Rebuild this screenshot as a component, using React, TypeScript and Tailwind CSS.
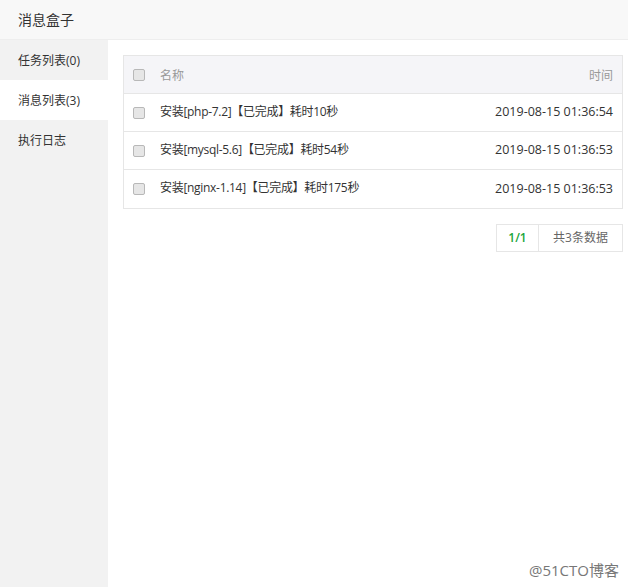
import React from 'react';

const rows = [
  { name: '安装[php-7.2]【已完成】耗时10秒', time: '2019-08-15 01:36:54' },
  { name: '安装[mysql-5.6]【已完成】耗时54秒', time: '2019-08-15 01:36:53' },
  { name: '安装[nginx-1.14]【已完成】耗时175秒', time: '2019-08-15 01:36:53' },
];

const tabs = ['任务列表(0)', '消息列表(3)', '执行日志'];

function Check() {
  return <span className="block w-[12px] h-[12px] border border-[#b8b8b8] rounded-[2px] bg-[#e6e6e6]" />;
}

export default function App() {
  return (
    <div
      className="relative w-[628px] h-[587px] bg-white text-[#333] flex flex-col overflow-hidden"
      style={{ fontFamily: '"Open Sans", "Noto Sans CJK SC", sans-serif' }}
    >
      {/* title bar */}
      <div className="h-[40px] shrink-0 bg-[#f8f8f8] border-b border-[#eee] flex items-center pl-[18px] text-[14px]">
        消息盒子
      </div>

      <div className="flex flex-1">
        {/* side tabs */}
        <div className="w-[108px] shrink-0 bg-[#f2f2f2]">
          {tabs.map((t, i) => (
            <div
              key={t}
              className={`h-[40px] flex items-center pl-[18px] pt-[2px] text-[12px] ${i === 1 ? 'bg-white' : ''}`}
            >
              {t}
            </div>
          ))}
        </div>

        {/* content */}
        <div className="flex-1 pt-[15px] pl-[15px] pr-[5px]">
          <div className="border border-[#e6e6e6]">
            <div className="h-[38px] bg-[#f5f5f8] flex items-center pl-[9px] pr-[9px] text-[12px] text-[#999] border-b border-[#e6e6e6]">
              <Check />
              <span className="ml-[15px] flex-1 pt-[3px]">名称</span>
              <span className="pt-[3px]">时间</span>
            </div>
            {rows.map((r, i) => (
              <div
                key={i}
                className={`h-[38px] flex items-center pl-[9px] pr-[9px] text-[12px] ${i < rows.length - 1 ? 'border-b border-[#e6e6e6]' : ''}`}
              >
                <Check />
                <span className="ml-[15px] flex-1 tracking-[-0.3px] pb-[2px]">{r.name}</span>
                <span className="text-[12.5px]">{r.time}</span>
              </div>
            ))}
          </div>

          <div className="flex justify-end mt-[15px]">
            <div className="flex h-[28px] border border-[#e6e6e6] text-[12px]">
              <span className="w-[42px] flex items-center justify-center text-[#20a53a] font-semibold border-r border-[#e6e6e6]">
                1/1
              </span>
              <span className="w-[83px] flex items-center justify-center text-[#666]">共3条数据</span>
            </div>
          </div>
        </div>
      </div>

      {/* watermark */}
      <div className="absolute right-[9px] bottom-[6px] text-[15px] text-[#777]">@51CTO博客</div>
    </div>
  );
}
